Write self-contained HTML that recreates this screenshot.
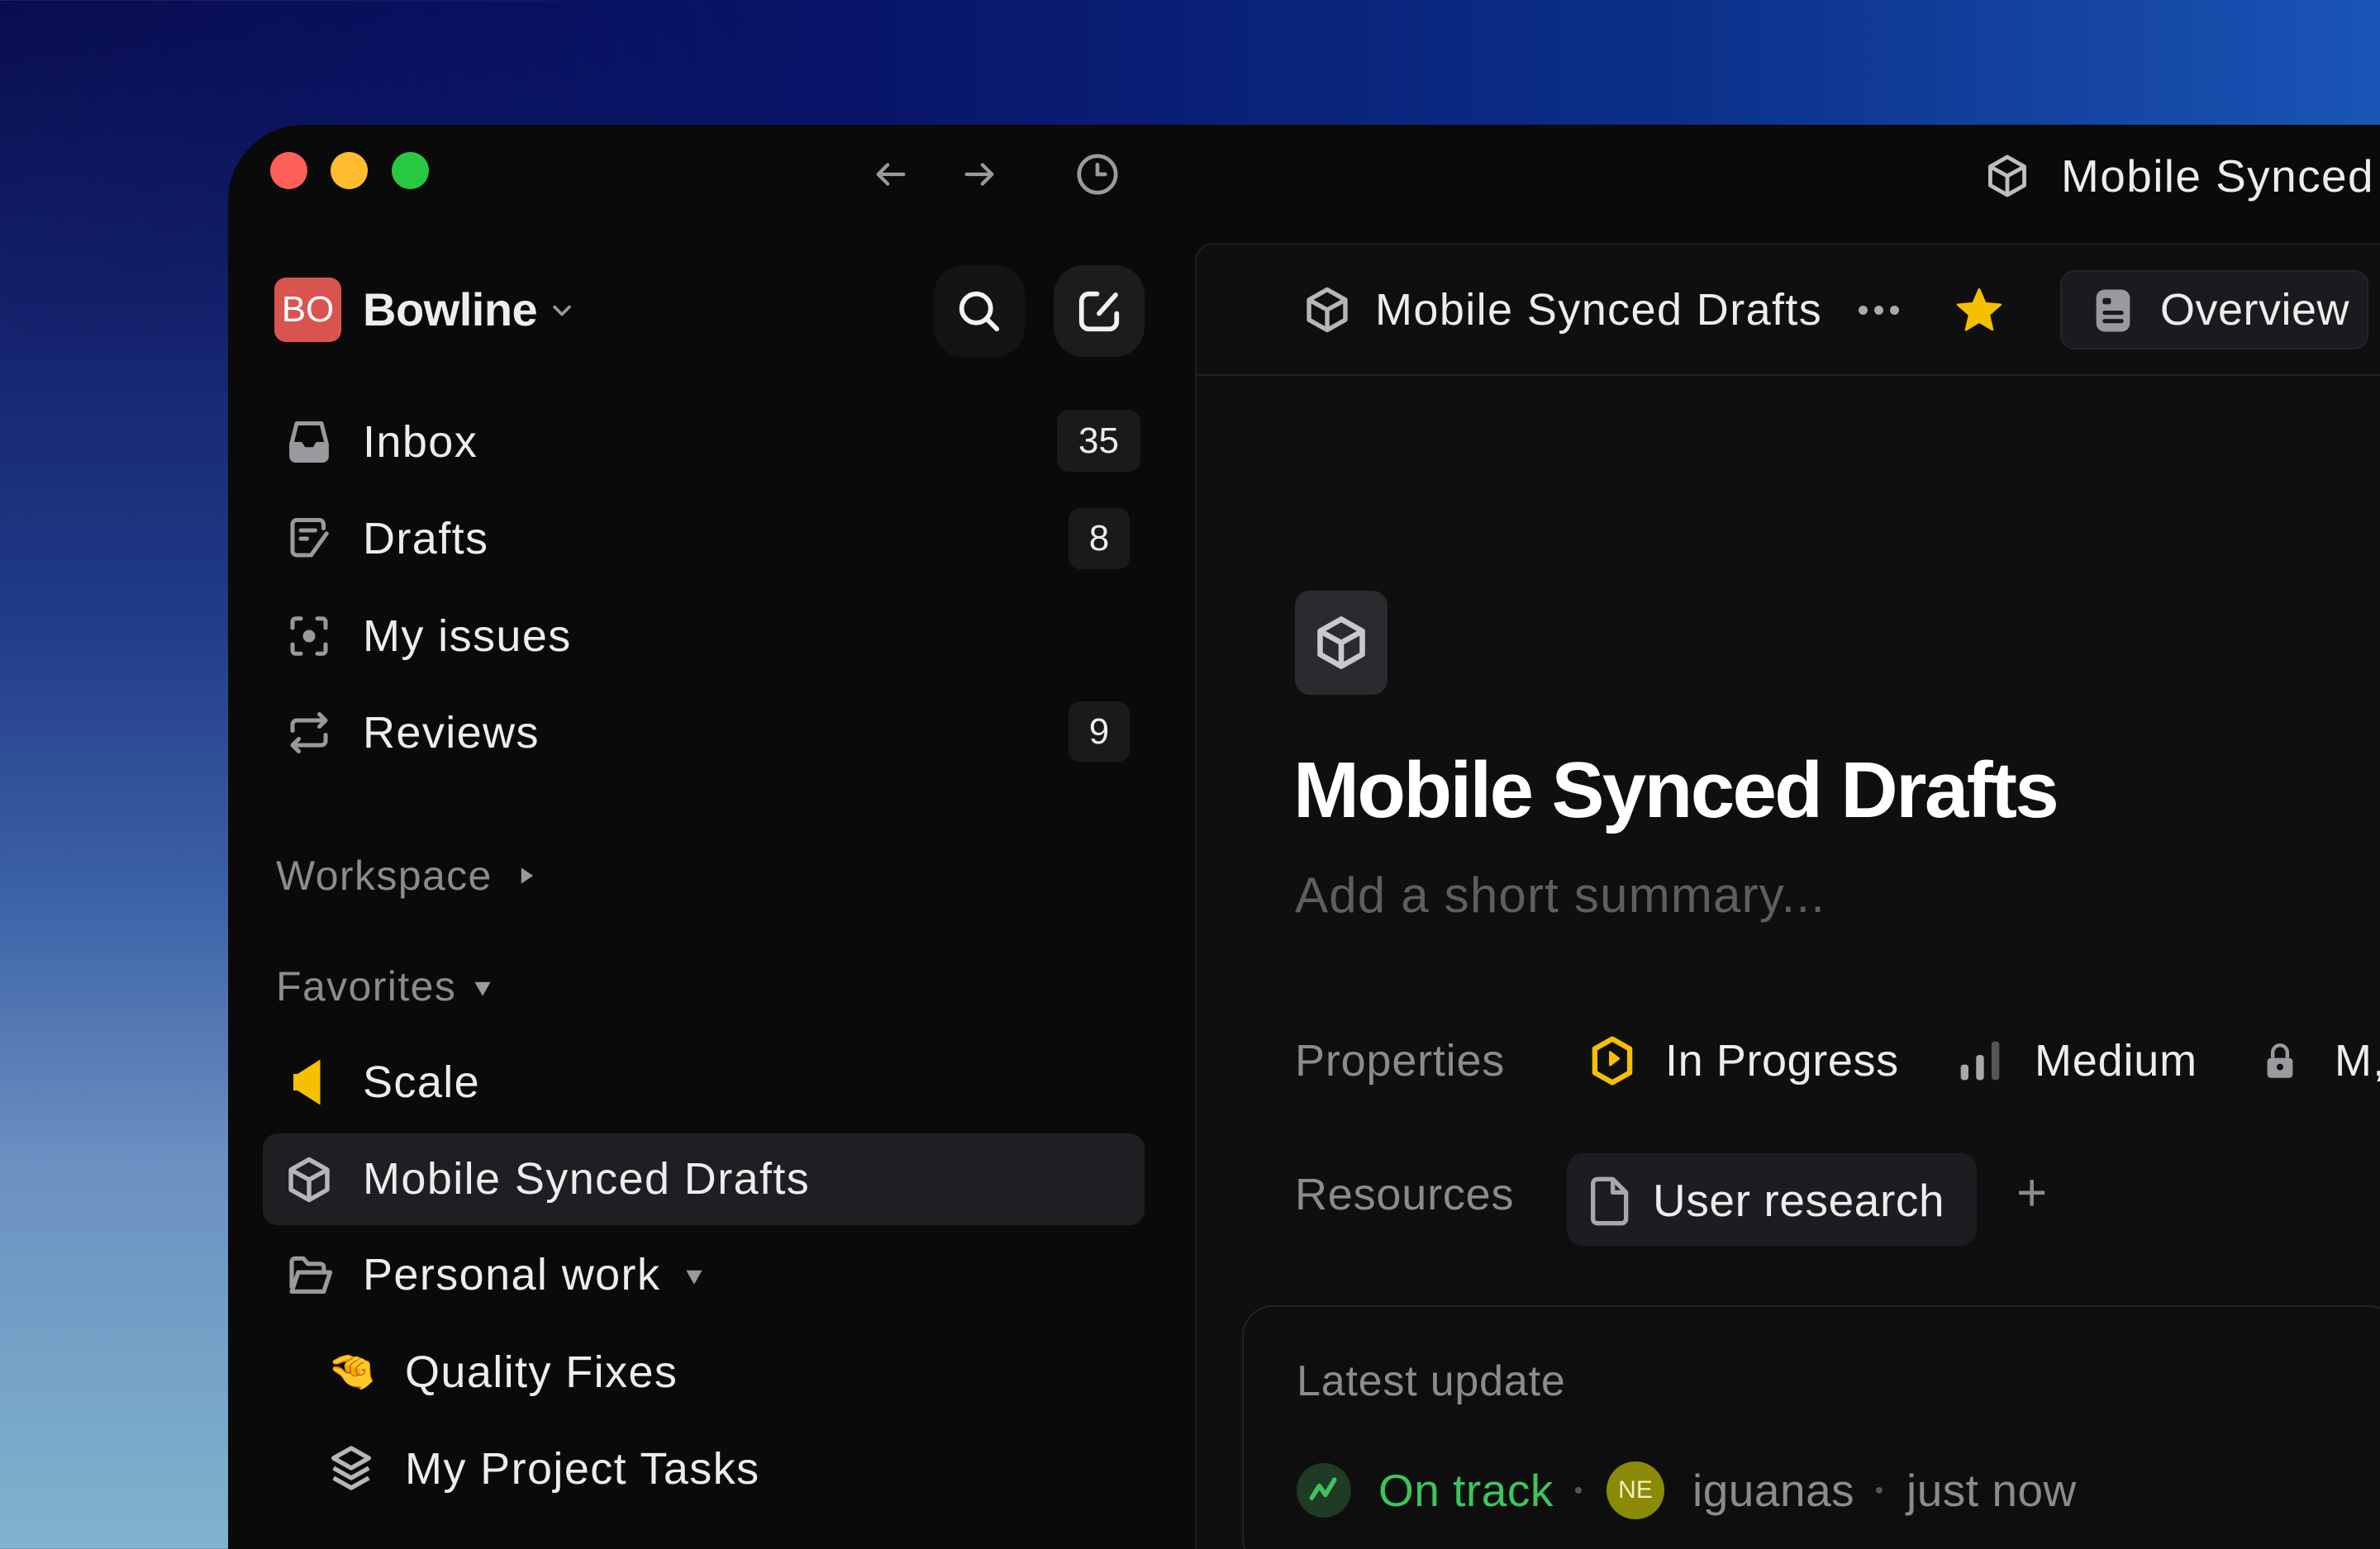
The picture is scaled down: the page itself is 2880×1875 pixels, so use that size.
<!DOCTYPE html>
<html><head><meta charset="utf-8"><style>
*{margin:0;padding:0;box-sizing:border-box}
html,body{width:2880px;height:1875px;overflow:hidden}
body{position:relative;font-family:"Liberation Sans",sans-serif;
background:linear-gradient(to bottom,#0a0d50 0%,#14226a 20%,#213c88 40%,#3d62a6 58%,#6b90c2 75%,#7fb4cc 100%);}
.top{position:absolute;left:0;top:0;width:2880px;height:420px;background:linear-gradient(90deg,rgba(10,13,80,0) 0%,#081468 35%,#0b2f88 70%,#1a55b5 100%);-webkit-mask-image:linear-gradient(to bottom,#000 40%,transparent 100%)}
.win{position:absolute;left:276px;top:151px;width:2604px;height:1724px;background:#0a0a0a;border-radius:92px 0 0 0}
.panel{position:absolute;left:1446px;top:294px;width:1434px;height:1581px;background:#0f0f10;border:2px solid #1f1f22;border-right:none;border-bottom:none;border-radius:22px 0 0 0}
.t{position:absolute;white-space:nowrap;line-height:80px;height:80px;color:#ededed;font-size:54px;letter-spacing:1.4px}
.g{color:#8b8b8f}
.ic{position:absolute}
.badge{position:absolute;background:#1a1a1c;border-radius:14px;color:#ededed;font-size:44px;text-align:center}
.dot{position:absolute;border-radius:50%}
</style></head><body>
<div class="top"></div>
<div class="win"></div>
<div class="dot" style="left:327px;top:184px;width:45px;height:45px;background:#fe5f57"></div>
<div class="dot" style="left:400px;top:184px;width:45px;height:45px;background:#febc2e"></div>
<div class="dot" style="left:474px;top:184px;width:45px;height:45px;background:#28c840"></div>
<svg class="ic" style="left:1055px;top:188px" width="46" height="46" viewBox="0 0 24 24" fill="none" stroke="#9a9a9e" stroke-width="2.2" stroke-linecap="round" stroke-linejoin="round"><path d="M20 12H4M10 6l-6 6 6 6"/></svg>
<svg class="ic" style="left:1162px;top:188px" width="46" height="46" viewBox="0 0 24 24" fill="none" stroke="#9a9a9e" stroke-width="2.2" stroke-linecap="round" stroke-linejoin="round"><path d="M4 12h16M14 6l6 6-6 6"/></svg>
<svg class="ic" style="left:1300px;top:183px" width="56" height="56" viewBox="0 0 24 24" fill="none" stroke="#9a9a9e" stroke-width="2" stroke-linecap="round"><circle cx="12" cy="12" r="9.5"/><path d="M12 7v5h4"/></svg>
<svg class="ic" style="left:2400px;top:184px" width="58" height="58" viewBox="0 0 24 24" fill="none" stroke="#bdbdc2" stroke-width="2" stroke-linejoin="round"><path d="M12 2.5l8.5 4.8v9.4L12 21.5 3.5 16.7V7.3z"/><path d="M3.8 7.5L12 12l8.2-4.5M12 12v9.3"/></svg>
<div class="t" style="left:2494px;top:173px;font-size:55px">Mobile Synced</div>

<div style="position:absolute;left:332px;top:336px;width:81px;height:78px;background:#d9534f;border-radius:14px;color:#fff;font-size:44px;line-height:78px;text-align:center">BO</div>
<div class="t" style="left:439px;top:335px;font-size:56px;font-weight:bold;letter-spacing:-0.5px">Bowline</div>
<svg class="ic" style="left:662px;top:358px" width="36" height="36" viewBox="0 0 24 24" fill="none" stroke="#9a9a9e" stroke-width="2.4" stroke-linecap="round" stroke-linejoin="round"><path d="M6 9l6 6 6-6"/></svg>
<div style="position:absolute;left:1130px;top:321px;width:110px;height:111px;background:#141416;border-radius:36px"></div>
<svg class="ic" style="left:1155px;top:347px" width="60" height="60" viewBox="0 0 24 24" fill="none" stroke="#f2f2f2" stroke-width="2.3" stroke-linecap="round"><circle cx="10.5" cy="10.5" r="7"/><path d="M15.5 15.5l5 5"/></svg>
<div style="position:absolute;left:1275px;top:321px;width:110px;height:111px;background:#1c1c1f;border-radius:36px"></div>
<svg class="ic" style="left:1300px;top:347px" width="60" height="60" viewBox="0 0 24 24" fill="none" stroke="#f2f2f2" stroke-width="2.3" stroke-linecap="round" stroke-linejoin="round"><path d="M11 3.5H7a3.5 3.5 0 0 0-3.5 3.5v10A3.5 3.5 0 0 0 7 20.5h10a3.5 3.5 0 0 0 3.5-3.5v-4"/><path d="M20 4l-8 9"/></svg>

<svg class="ic" style="left:344px;top:505px" width="60" height="60" viewBox="0 0 24 24" fill="none" stroke="#9a9a9e" stroke-width="2" stroke-linejoin="round"><path d="M6 3h12l2.5 10v6a2 2 0 0 1-2 2h-13a2 2 0 0 1-2-2v-6z"/><path d="M3.5 13H8l1.5 2.5h5L16 13h4.5v6a2 2 0 0 1-2 2h-13a2 2 0 0 1-2-2z" fill="#9a9a9e"/></svg>
<div class="t" style="left:439px;top:495px">Inbox</div>
<div class="badge" style="left:1279px;top:496px;width:101px;height:75px;line-height:75px">35</div>

<svg class="ic" style="left:344px;top:622px" width="60" height="60" viewBox="0 0 24 24" fill="none" stroke="#9a9a9e" stroke-width="2" stroke-linecap="round" stroke-linejoin="round"><path d="M12 20H6a2 2 0 0 1-2-2V5a2 2 0 0 1 2-2h11a2 2 0 0 1 2 2v2"/><path d="M8 8h7M8 12h3M20.5 9.5L13 20"/></svg>
<div class="t" style="left:439px;top:612px">Drafts</div>
<div class="badge" style="left:1293px;top:615px;width:74px;height:74px;line-height:74px">8</div>

<svg class="ic" style="left:344px;top:740px" width="60" height="60" viewBox="0 0 24 24" fill="none" stroke="#9a9a9e" stroke-width="2" stroke-linecap="round"><path d="M4 8V5a1.5 1.5 0 0 1 1.5-1.5H8M16 3.5h2.5A1.5 1.5 0 0 1 20 5v3M20 16v3a1.5 1.5 0 0 1-1.5 1.5H16M8 20.5H5.5A1.5 1.5 0 0 1 4 19v-3"/><circle cx="12" cy="12" r="2" fill="#9a9a9e"/></svg>
<div class="t" style="left:439px;top:730px">My issues</div>

<svg class="ic" style="left:344px;top:857px" width="60" height="60" viewBox="0 0 24 24" fill="none" stroke="#9a9a9e" stroke-width="2" stroke-linecap="round" stroke-linejoin="round"><path d="M4 11V8a2 2 0 0 1 2-2h14M17 3l3 3-3 3M20 13v3a2 2 0 0 1-2 2H4M7 21l-3-3 3-3"/></svg>
<div class="t" style="left:439px;top:847px">Reviews</div>
<div class="badge" style="left:1293px;top:849px;width:74px;height:73px;line-height:73px">9</div>

<div class="t g" style="left:334px;top:1020px;font-size:50px">Workspace</div>
<svg class="ic" style="left:626px;top:1048px" width="24" height="24" viewBox="0 0 10 10"><path d="M2 1l6 4-6 4z" fill="#9a9a9e"/></svg>
<div class="t g" style="left:334px;top:1154px;font-size:50px">Favorites</div>
<svg class="ic" style="left:572px;top:1184px" width="24" height="24" viewBox="0 0 10 10"><path d="M1 2h8L5 9z" fill="#9a9a9e"/></svg>

<svg class="ic" style="left:350px;top:1280px" width="50" height="60" viewBox="0 0 20 24"><path d="M4 8l11-7v22L4 16H2V8z" fill="#f5c000"/></svg>
<div class="t" style="left:439px;top:1270px">Scale</div>

<div style="position:absolute;left:318px;top:1372px;width:1067px;height:111px;background:#1e1f23;border-radius:18px"></div>
<svg class="ic" style="left:343px;top:1397px" width="62" height="62" viewBox="0 0 24 24" fill="none" stroke="#b5b5ba" stroke-width="2.1" stroke-linejoin="round"><path d="M12 2.5l8.5 4.8v9.4L12 21.5 3.5 16.7V7.3z"/><path d="M3.8 7.5L12 12l8.2-4.5M12 12v9.3"/></svg>
<div class="t" style="left:439px;top:1387px">Mobile Synced Drafts</div>

<svg class="ic" style="left:344px;top:1513px" width="62" height="62" viewBox="0 0 24 24" fill="none" stroke="#9a9a9e" stroke-width="2" stroke-linejoin="round"><path d="M3.5 18V5.5a1.5 1.5 0 0 1 1.5-1.5h4l2 2.5h6a1.5 1.5 0 0 1 1.5 1.5v2"/><path d="M3.5 19.5l3-9h15l-3 9z"/></svg>
<div class="t" style="left:439px;top:1503px">Personal work</div>
<svg class="ic" style="left:828px;top:1533px" width="24" height="24" viewBox="0 0 10 10"><path d="M1 2h8L5 9z" fill="#9a9a9e"/></svg>

<div class="t" style="left:396px;top:1621px;font-size:48px">🤏</div>
<div class="t" style="left:490px;top:1621px">Quality Fixes</div>
<svg class="ic" style="left:393px;top:1745px" width="64" height="64" viewBox="0 0 24 24" fill="none" stroke="#b5b5ba" stroke-width="2" stroke-linejoin="round"><path d="M12 3l8 4.5-8 4.5-8-4.5z"/><path d="M4 12l8 4.5 8-4.5M4 16.5l8 4.5 8-4.5"/></svg>
<div class="t" style="left:490px;top:1738px">My Project Tasks</div>

<div class="panel"></div>
<div style="position:absolute;left:1448px;top:453px;width:1440px;height:2px;background:#1f1f22"></div>
<svg class="ic" style="left:1575px;top:344px" width="62" height="62" viewBox="0 0 24 24" fill="none" stroke="#b5b5ba" stroke-width="2.1" stroke-linejoin="round"><path d="M12 2.5l8.5 4.8v9.4L12 21.5 3.5 16.7V7.3z"/><path d="M3.8 7.5L12 12l8.2-4.5M12 12v9.3"/></svg>
<div class="t" style="left:1664px;top:335px">Mobile Synced Drafts</div>
<div class="dot" style="left:2249px;top:370px;width:11px;height:11px;background:#aaa"></div>
<div class="dot" style="left:2268px;top:370px;width:11px;height:11px;background:#aaa"></div>
<div class="dot" style="left:2287px;top:370px;width:11px;height:11px;background:#aaa"></div>
<svg class="ic" style="left:2364px;top:345px" width="62" height="62" viewBox="0 0 24 24"><path d="M12 2l2.9 6.6 7.1.6-5.4 4.7 1.6 7L12 17.3 5.8 21l1.6-7L2 9.2l7.1-.6z" fill="#f5c000" stroke="#f5c000" stroke-width="1" stroke-linejoin="round"/></svg>
<div style="position:absolute;left:2493px;top:327px;width:373px;height:96px;background:#1a1b1e;border:2px solid #242529;border-radius:18px"></div>
<svg class="ic" style="left:2530px;top:348px" width="54" height="56" viewBox="0 0 20 22"><rect x="2" y="1" width="16" height="20" rx="4" fill="#9a9a9e"/><rect x="5" y="5" width="4" height="3" rx="1" fill="#1a1b1e"/><rect x="5" y="11" width="10" height="2" rx="1" fill="#1a1b1e"/><rect x="5" y="15" width="10" height="2" rx="1" fill="#1a1b1e"/></svg>
<div class="t" style="left:2614px;top:335px;letter-spacing:0.5px">Overview</div>

<div style="position:absolute;left:1567px;top:715px;width:112px;height:126px;background:#2a2b2e;border-radius:18px"></div>
<svg class="ic" style="left:1587px;top:740px" width="72" height="76" viewBox="0 0 24 24" fill="none" stroke="#c8c8cd" stroke-width="2.2" stroke-linejoin="round"><path d="M12 2.5l8.5 4.8v9.4L12 21.5 3.5 16.7V7.3z"/><path d="M3.8 7.5L12 12l8.2-4.5M12 12v9.3"/></svg>
<div class="t" style="left:1565px;top:897px;font-size:96px;line-height:120px;height:120px;font-weight:bold;color:#fff;letter-spacing:-2.6px">Mobile Synced Drafts</div>
<div class="t" style="left:1567px;top:1044px;font-size:60px;color:#5e5e62;letter-spacing:1.2px">Add a short summary...</div>

<div class="t g" style="left:1567px;top:1244px;font-size:54px;letter-spacing:0.8px">Properties</div>
<svg class="ic" style="left:1922px;top:1252px" width="58" height="64" viewBox="0 0 22 24" fill="none" stroke="#f5c000" stroke-width="2.4" stroke-linejoin="round"><path d="M11 2l8 4.5v11L11 22 3 17.5v-11z"/><path d="M10 8v6l4-3z" fill="#f5c000" stroke-width="1"/></svg>
<div class="t" style="left:2015px;top:1244px;font-size:54px;letter-spacing:0.6px">In Progress</div>
<svg class="ic" style="left:2368px;top:1256px" width="56" height="56" viewBox="0 0 24 24"><rect x="2" y="14" width="4" height="8" rx="1.5" fill="#a8a8ac"/><rect x="10" y="9" width="4" height="13" rx="1.5" fill="#a8a8ac"/><rect x="18" y="2" width="4" height="20" rx="1.5" fill="#55565a"/></svg>
<div class="t" style="left:2462px;top:1244px;font-size:54px;letter-spacing:0.8px">Medium</div>
<svg class="ic" style="left:2740px;top:1263px" width="38" height="44" viewBox="0 0 16 20"><rect x="1" y="8" width="14" height="11" rx="2" fill="#9a9a9e"/><path d="M4 8V5a4 4 0 0 1 8 0v3" fill="none" stroke="#9a9a9e" stroke-width="2"/><circle cx="8" cy="13" r="1.8" fill="#0f0f10"/></svg>
<div class="t" style="left:2825px;top:1244px;font-size:54px">M,</div>

<div class="t g" style="left:1567px;top:1406px;font-size:54px;letter-spacing:0.8px">Resources</div>
<div style="position:absolute;left:1896px;top:1396px;width:496px;height:112px;background:#1c1d21;border-radius:20px"></div>
<svg class="ic" style="left:1920px;top:1422px" width="58" height="64" viewBox="0 0 20 24" fill="none" stroke="#a8a8ac" stroke-width="2" stroke-linejoin="round"><path d="M4 2h7l6 6v12a2 2 0 0 1-2 2H4a2 2 0 0 1-2-2V4a2 2 0 0 1 2-2z"/><path d="M11 2v6h6"/></svg>
<div class="t" style="left:2000px;top:1413px;font-size:55px;letter-spacing:0.6px">User research</div>
<div class="t g" style="left:2440px;top:1403px;font-size:64px">+</div>

<div style="position:absolute;left:1503px;top:1580px;width:1400px;height:320px;border:2px solid #232326;border-radius:38px;background:#0e0e0f"></div>
<div class="t g" style="left:1569px;top:1632px;font-size:52px;letter-spacing:0.8px">Latest update</div>
<div class="dot" style="left:1569px;top:1771px;width:66px;height:66px;background:#1f3a25"></div>
<svg class="ic" style="left:1580px;top:1782px" width="44" height="44" viewBox="0 0 24 24" fill="none" stroke="#3ec45c" stroke-width="3" stroke-linecap="round" stroke-linejoin="round"><path d="M4 17l5-8 4 6 6-10"/></svg>
<div class="t" style="left:1668px;top:1764px;font-size:55px;color:#3ec45c;letter-spacing:0.5px">On track</div>
<div class="dot" style="left:1906px;top:1800px;width:8px;height:8px;background:#555"></div>
<div class="dot" style="left:1944px;top:1769px;width:70px;height:70px;background:#8a8a06;color:#f0f0c0;font-size:30px;line-height:70px;text-align:center">NE</div>
<div class="t g" style="left:2048px;top:1764px;font-size:55px;letter-spacing:0.5px">iguanas</div>
<div class="dot" style="left:2270px;top:1800px;width:8px;height:8px;background:#555"></div>
<div class="t g" style="left:2307px;top:1764px;font-size:55px;letter-spacing:0.5px">just now</div>
</body></html>
